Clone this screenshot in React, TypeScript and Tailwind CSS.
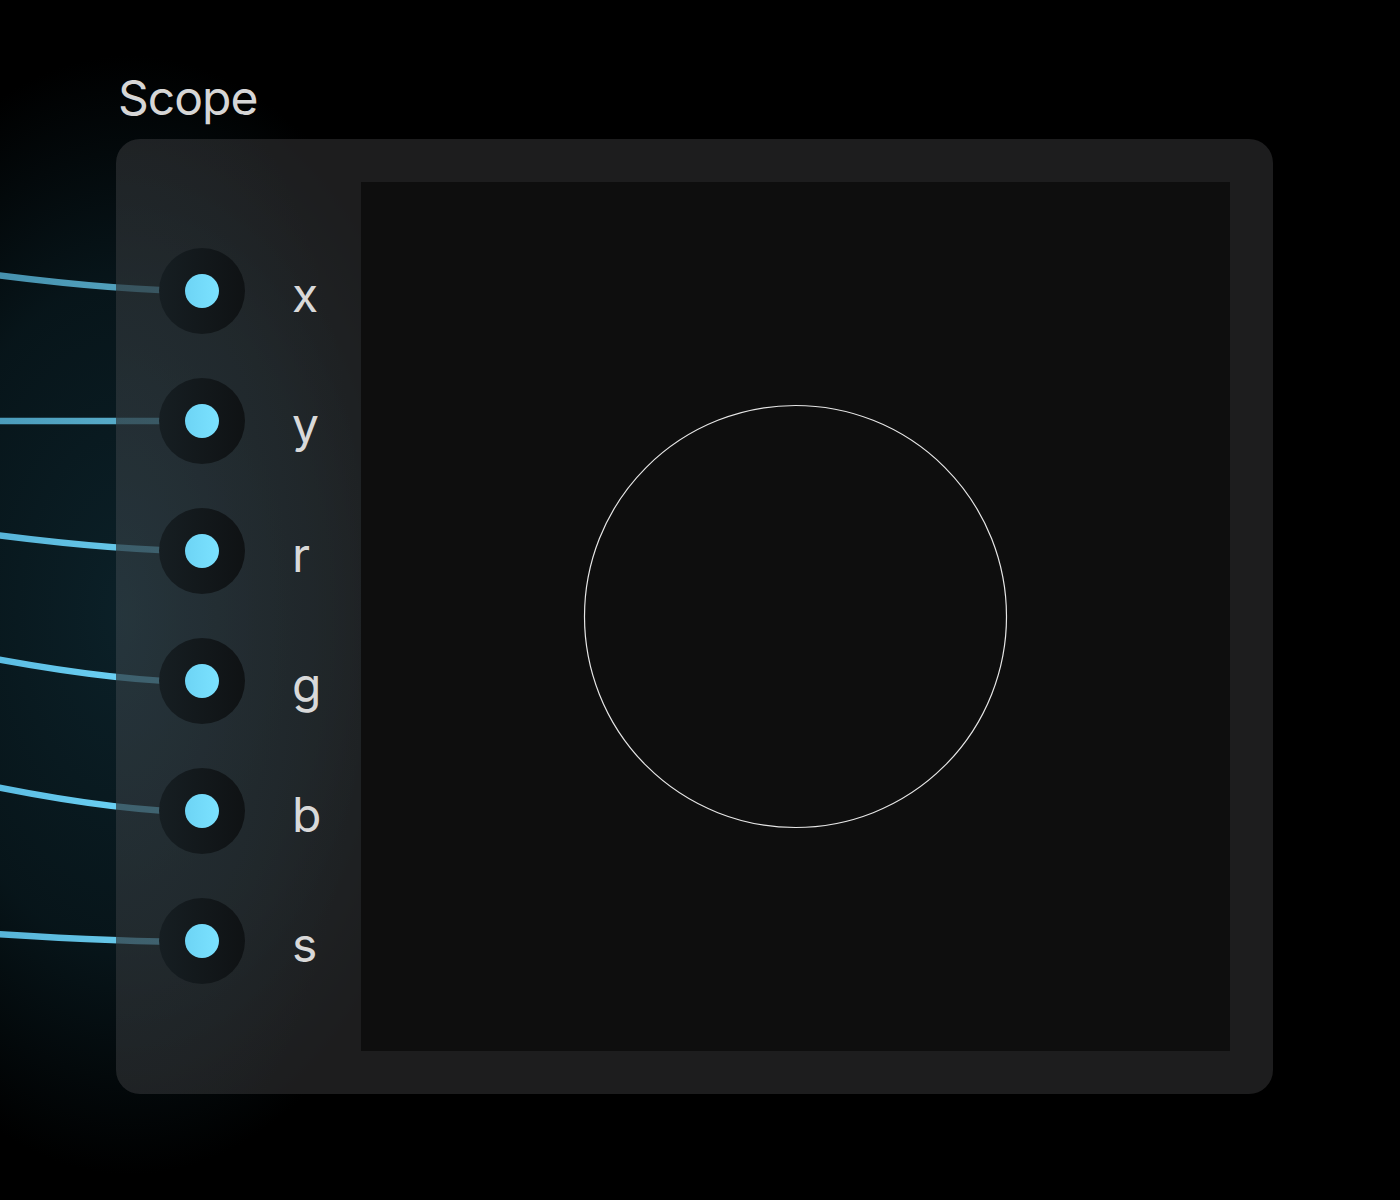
import React from 'react'

const ports = ['x', 'y', 'r', 'g', 'b', 's']

// y at the left screen edge, y at the port centre, stroke opacity
const wires = [
    { from: 275, to: 291, opacity: 0.75 },
    { from: 421, to: 421, opacity: 0.8 },
    { from: 535, to: 551, opacity: 0.95 },
    { from: 659, to: 682, opacity: 1 },
    { from: 787, to: 812, opacity: 1 },
    { from: 934, to: 942, opacity: 0.95 },
]

function Wires() {
    return (
        <svg
            className="absolute left-0 top-0 z-0 pointer-events-none"
            width={1400}
            height={1200}
            viewBox="0 0 1400 1200"
        >
            <defs>
                <linearGradient id="wire" gradientUnits="userSpaceOnUse" x1="0" y1="0" x2="160" y2="0">
                    <stop offset="0" stopColor="#5cbde3" />
                    <stop offset="1" stopColor="#6fd6f8" />
                </linearGradient>
            </defs>
            {wires.map((w, i) => (
                <path
                    key={i}
                    d={`M -40 ${w.from - (w.to - w.from) * 0.3} Q 110 ${w.to} 202 ${w.to}`}
                    fill="none"
                    stroke="url(#wire)"
                    strokeWidth={6.5}
                    strokeOpacity={w.opacity}
                />
            ))}
        </svg>
    )
}

function Port({ label }: { label: string }) {
    return (
        <div className="flex items-center h-[86px]">
            <div className="w-[86px] h-[86px] rounded-full bg-[linear-gradient(90deg,#161e22,#0f1214)] flex items-center justify-center shrink-0">
                <div className="w-[34px] h-[34px] rounded-full bg-[linear-gradient(90deg,#6dd4f5,#7be2ff)]" />
            </div>
            <span className="ml-[47px] mt-[7px] text-[48px] leading-none text-[#d9d9d9]">{label}</span>
        </div>
    )
}

function Scope() {
    return (
        <div className="w-[869px] h-[869px] bg-[#0e0e0e] shrink-0">
            <svg width={869} height={869} viewBox="0 0 869 869">
                <circle cx={434.5} cy={434.5} r={211} fill="none" stroke="#e6e6e6" strokeWidth={1.2} />
            </svg>
        </div>
    )
}

export default function App() {
    return (
        <div
            className="relative w-[1400px] h-[1200px] bg-black overflow-hidden"
            style={{ fontFamily: 'Inter, "Noto Sans", sans-serif' }}
        >
            {/* teal glow behind the panel edge */}
            <div className="absolute left-0 top-0 w-[1400px] h-[1200px] z-0 bg-[radial-gradient(ellipse_340px_560px_at_130px_615px,rgba(12,34,42,0.95),rgba(9,26,32,0.8)_60%,transparent_100%)]" />
            <Wires />

            <div className="relative z-10 pl-[116px] pt-[74px]">
                <h1 className="pl-[2px] text-[48px] leading-none font-normal tracking-[-0.02em] text-[#d6d6d6]">Scope</h1>

                <div className="mt-[17px] w-[1157px] h-[955px] rounded-[24px] bg-[rgba(44,44,46,0.66)] overflow-hidden">
                    <div className="w-full h-full p-[43px] flex bg-[radial-gradient(ellipse_250px_600px_at_0%_50%,rgba(50,85,100,0.3),rgba(50,85,100,0.12)_55%,transparent)]">
                        <div className="w-[202px] flex flex-col gap-[44px] py-[66px]">
                            {ports.map((p) => (
                                <Port key={p} label={p} />
                            ))}
                        </div>
                        <Scope />
                    </div>
                </div>
            </div>
        </div>
    )
}
